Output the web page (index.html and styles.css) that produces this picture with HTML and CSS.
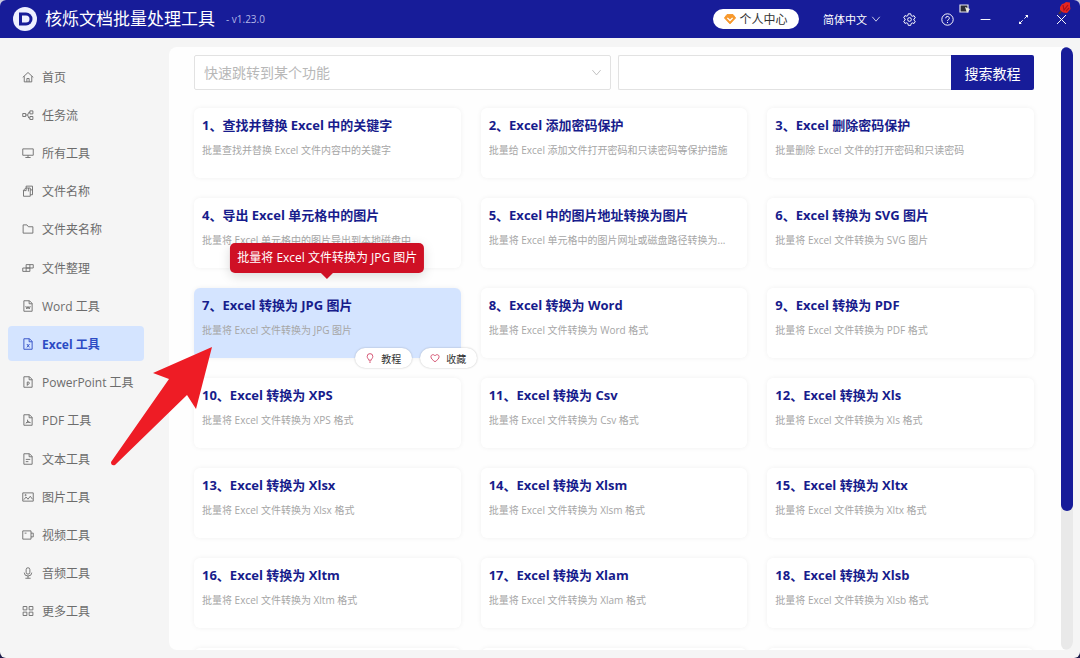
FILE: index.html
```
<!DOCTYPE html>
<html lang="zh-CN">
<head>
    <meta charset="UTF-8">
    <meta name="viewport" content="width=device-width, initial-scale=1.0">
    <title>核烁文档批量处理工具</title>
    <link rel="stylesheet" href="styles.css">
</head>
<body>
    <header class="topbar">
        <svg class="logo" viewBox="0 0 24 24">
            <circle cx="12" cy="12" r="12" fill="#eef0ff"/>
            <path d="M6 5.5H13a6.5 6.5 0 0 1 0 13H6z" fill="#171c99"/>
            <path d="M9 8.500H13a3.500 3.500 0 0 1 0 7H9z" fill="#eef0ff"/>
        </svg>
        <h1>核烁文档批量处理工具</h1>
        <span class="version">- v1.23.0</span>
        <button class="user-center">
            <svg viewBox="0 0 16 16"><path d="M4 2h8l3.5 4.5L8 14.5.5 6.5z" fill="#f7992c" stroke="#f7992c" stroke-linejoin="round"/><path d="M4.5 6.5 8 10l3.5-3.5" fill="none" stroke="#fff" stroke-width="1.8"/></svg>
            个人中心
        </button>
        <div class="lang">
            <select aria-label="语言"><option>简体中文</option></select>
            <svg viewBox="0 0 16 16"><path d="M2 4.5l6 7 6-7"/></svg>
        </div>
        <div class="window-buttons">
            <button aria-label="设置"><svg viewBox="0 0 16 16"><path d="M6.5 1h3l.5 2.200 1.400.8 2.200-.7 1.500 2.600-1.700 1.500v1.400l1.700 1.500-1.500 2.600-2.200-.7-1.400.8-.5 2.200h-3L6 12.900l-1.400-.8-2.200.7-1.500-2.600 1.700-1.500V7.300L.9 5.800l1.500-2.600 2.200.7L6 3.200z"/><circle cx="8" cy="8" r="2.300"/></svg></button>
            <button aria-label="帮助"><svg viewBox="0 0 16 16"><circle cx="8" cy="8" r="7"/><path d="M5.800 6.500a2.200 2.200 0 1 1 3.300 1.800C8.300 8.700 8 9 8 9.900M8 11v1.300"/></svg></button>
            <button aria-label="最小化"><svg viewBox="0 0 16 16"><path d="M2 8h12"/></svg></button>
            <button aria-label="最大化"><svg viewBox="0 0 16 16"><path d="M3.500 12.500l9-9" stroke-dasharray="5 3"/><path class="solid" d="M10 2.500h3.500V6zM2.500 10v3.500H6z"/></svg></button>
            <button aria-label="关闭"><svg viewBox="0 0 16 16"><path d="M2.500 2.500l11 11M13.500 2.500l-11 11"/></svg></button>
        </div>
        <svg class="screen-mark" viewBox="0 0 12 10">
            <path d="M1 1h8v7H1z" fill="#2b2b35" stroke="#e6e6ee"/><path d="M6 3l5 2-3 4z" fill="#e9e9dd"/>
        </svg>
        <svg class="tulip" viewBox="0 0 14 14">
            <path d="M4 9 1 13" stroke="#4a3038" stroke-width="2"/>
            <path d="M2 6l2-3 2-.5L8 1l4 .5V5l.5 3L9 12l-4-.5L2 9z" fill="#e52520"/><path d="M5 4l1 5 4-5M8 10l3-3" fill="none" stroke="#a80f18"/>
        </svg>
    </header>

    <div class="layout">
        <nav class="sidebar">
            <a href="#"><svg viewBox="0 0 16 16"><path d="M1 8.500 8 2l7 6.500M3 7v7.500h10V7M6.500 14.500V10h3v4.500"/></svg>首页</a>
            <a href="#"><svg viewBox="0 0 16 16"><path d="M1 6h4v4H1zM10.500 2.500h4v4h-4zM10.500 10h4v4h-4zM5 8h2.500M10.500 4.500H9L7.500 8 9 12h1.500"/></svg>任务流</a>
            <a href="#"><svg viewBox="0 0 16 16"><path d="M1 2.500h14v8.500H1zM8 11v3M4.500 14h7"/></svg>所有工具</a>
            <a href="#"><svg viewBox="0 0 16 16"><path d="M5.500 4V1.500H14V13h-3M2 7l3-3h6v11H2zM2 7.500h3.500V4M8.500 8.500V4M11 6.500h3"/></svg>文件名称</a>
            <a href="#"><svg viewBox="0 0 16 16"><path d="M1.500 2.500h5l2 2.500h6v8.500h-13z"/></svg>文件夹名称</a>
            <a href="#"><svg viewBox="0 0 16 16"><path d="M5.500 3.500H15V8H5.500zM1 8h9.500v4.500H1zM5.500 8v4.500M10.500 3.500V8"/></svg>文件整理</a>
            <a href="#"><svg viewBox="0 0 16 16"><path d="M2.500 1H10l3.500 3.500V15h-11zM9.500 1v4h4M5 8l1.500 4L8 8.500 9.500 12 11 8"/></svg>Word 工具</a>
            <a href="#" class="active"><svg viewBox="0 0 16 16"><path d="M2.500 1H10l3.500 3.500V15h-11zM9.500 1v4h4M6.500 8l3.500 4.500M10 8l-3.500 4.500"/></svg>Excel 工具</a>
            <a href="#"><svg viewBox="0 0 16 16"><path d="M2.500 1H10l3.500 3.500V15h-11zM9.500 1v4h4M7 13V8h2q1.500 1.500 0 3H7"/></svg>PowerPoint 工具</a>
            <a href="#"><svg viewBox="0 0 16 16"><path d="M2.500 1H10l3.500 3.500V15h-11zM9.500 1v4h4M7.500 7.500q1 3-2.500 5M7.500 9q.5 2.500 4 2.500M6 11.500q2-1 4-.5"/></svg>PDF 工具</a>
            <a href="#"><svg viewBox="0 0 16 16"><path d="M2.500 1H10l3.500 3.500V15h-11zM9.500 1v4h4M5 8.500h6M5 11.500h3.500"/></svg>文本工具</a>
            <a href="#"><svg viewBox="0 0 16 16"><path d="M1 2.500h14v11H1zM2.500 11.500l3-3.500 2.500 3 3-4 3 4"/><circle cx="4.800" cy="5.500" r=".8"/></svg>图片工具</a>
            <a href="#"><svg viewBox="0 0 16 16"><path d="M1 2.500h11v11H1zM12 5.500h3v5h-3M3.500 5.500H6"/></svg>视频工具</a>
            <a href="#"><svg viewBox="0 0 16 16"><rect x="5.500" y="1" width="5" height="8.500" rx="2.500"/><path d="M3 7.500a5 4.500 0 0 0 10 0M8 12v3M4.500 15h7"/></svg>音频工具</a>
            <a href="#"><svg viewBox="0 0 16 16"><path d="M1.500 2h5v4.500h-5zM9.500 2h5v4.500h-5zM1.500 9.500h5V14h-5zM9.500 9.500h5V14h-5z"/></svg>更多工具</a>
        </nav>

        <main class="panel">
            <div class="content">
                <div class="search-row">
                    <div class="jump">
                        <select aria-label="快速跳转到某个功能"><option>快速跳转到某个功能</option></select>
                        <svg viewBox="0 0 16 16"><path d="M2 4.5l6 7 6-7"/></svg>
                    </div>
                    <form class="search">
                        <input type="text" aria-label="搜索教程">
                        <button type="button">搜索教程</button>
                    </form>
                </div>

                <div class="cards">
                    <section class="card"><h2>1、查找并替换 Excel 中的关键字</h2><p>批量查找并替换 Excel 文件内容中的关键字</p></section>
                    <section class="card"><h2>2、Excel 添加密码保护</h2><p>批量给 Excel 添加文件打开密码和只读密码等保护措施</p></section>
                    <section class="card"><h2>3、Excel 删除密码保护</h2><p>批量删除 Excel 文件的打开密码和只读密码</p></section>
                    <section class="card"><h2>4、导出 Excel 单元格中的图片</h2><p>批量将 Excel 单元格中的图片导出到本地磁盘中</p></section>
                    <section class="card"><h2>5、Excel 中的图片地址转换为图片</h2><p>批量将 Excel 单元格中的图片网址或磁盘路径转换为...</p></section>
                    <section class="card"><h2>6、Excel 转换为 SVG 图片</h2><p>批量将 Excel 文件转换为 SVG 图片</p></section>
                    <section class="card hovered">
                        <h2>7、Excel 转换为 JPG 图片</h2>
                        <p>批量将 Excel 文件转换为 JPG 图片</p>
                        <div class="tooltip" role="tooltip">批量将 Excel 文件转换为 JPG 图片</div>
                        <div class="actions">
                            <button><svg viewBox="0 0 16 16"><path d="M6 11.500C6 9.500 3.500 8.500 3.500 5.500a4.500 4.500 0 0 1 9 0c0 3-2.500 4-2.500 6zM6.500 14.500h3"/></svg>教程</button>
                            <button><svg viewBox="0 0 16 16"><path d="M8 14C4 11 1.500 9 1.500 5.800 1.500 2.500 6 1.500 8 4.500c2-3 6.500-2 6.500 1.300C14.500 9 12 11 8 14z"/></svg>收藏</button>
                        </div>
                    </section>
                    <section class="card"><h2>8、Excel 转换为 Word</h2><p>批量将 Excel 文件转换为 Word 格式</p></section>
                    <section class="card"><h2>9、Excel 转换为 PDF</h2><p>批量将 Excel 文件转换为 PDF 格式</p></section>
                    <section class="card"><h2>10、Excel 转换为 XPS</h2><p>批量将 Excel 文件转换为 XPS 格式</p></section>
                    <section class="card"><h2>11、Excel 转换为 Csv</h2><p>批量将 Excel 文件转换为 Csv 格式</p></section>
                    <section class="card"><h2>12、Excel 转换为 Xls</h2><p>批量将 Excel 文件转换为 Xls 格式</p></section>
                    <section class="card"><h2>13、Excel 转换为 Xlsx</h2><p>批量将 Excel 文件转换为 Xlsx 格式</p></section>
                    <section class="card"><h2>14、Excel 转换为 Xlsm</h2><p>批量将 Excel 文件转换为 Xlsm 格式</p></section>
                    <section class="card"><h2>15、Excel 转换为 Xltx</h2><p>批量将 Excel 文件转换为 Xltx 格式</p></section>
                    <section class="card"><h2>16、Excel 转换为 Xltm</h2><p>批量将 Excel 文件转换为 Xltm 格式</p></section>
                    <section class="card"><h2>17、Excel 转换为 Xlam</h2><p>批量将 Excel 文件转换为 Xlam 格式</p></section>
                    <section class="card"><h2>18、Excel 转换为 Xlsb</h2><p>批量将 Excel 文件转换为 Xlsb 格式</p></section>
                    <section class="card"></section>
                    <section class="card"></section>
                    <section class="card"></section>
                </div>
            </div>
            <div class="scrollbar"><div class="thumb"></div></div>
        </main>
    </div>

    <svg class="pointer" viewBox="0 0 102 119">
        <path d="M102 0 43 26l16 6L1 115q0 4 4 3L77 48l9 14z" fill="#ee1c25"/>
    </svg>
</body>
</html>
```
FILE: styles.css
```
* {
    box-sizing: border-box;
}
html {
    background: linear-gradient(#c9cbe0 50%, #1d1d4a 50%);
}
body {
    display: flex;
    flex-direction: column;
    height: 100vh;
    margin: 0;
    overflow: hidden;
    border-radius: 6px;
    background-color: #f5f5f5;
    font-family: "Open Sans", "Noto Sans CJK SC", sans-serif;
    font-size: 12px;
    position: relative;
}
button, input, select {
    font-family: inherit;
    border: none;
    margin: 0;
    padding: 0;
}
svg {
    flex: none;
    fill: none;
    stroke: currentColor;
    stroke-width: 1.2;
}
.logo, .screen-mark, .tulip, .pointer {
    stroke: none;
}

/* top bar */
.topbar {
    display: flex;
    align-items: center;
    flex: none;
    height: 38px;
    padding-left: 13px;
    background-color: #171c99;
    color: white;
    position: relative;
}
.logo {
    width: 24px;
    height: 24px;
}
.topbar h1 {
    margin: 0 11px 0 8px;
    font-size: 17px;
    font-weight: 400;
    line-height: 24px;
}
.version {
    color: #b4b7e6;
    font-size: 10px;
}
.user-center {
    display: flex;
    align-items: center;
    justify-content: center;
    gap: 3px;
    width: 86px;
    height: 20px;
    margin-left: auto;
    border-radius: 10px;
    background-color: white;
    color: #333;
    font-size: 12px;
}
.user-center svg {
    width: 12px;
    height: 12px;
}
.lang {
    display: flex;
    align-items: center;
    margin: 0 9px 0 24px;
    width: 58px;
    position: relative;
}
.lang select {
    appearance: none;
    width: 100%;
    background: none;
    color: white;
    font-size: 11px;
}
.lang svg {
    position: absolute;
    right: 0;
    width: 10px;
    height: 10px;
    pointer-events: none;
}
.window-buttons {
    display: flex;
}
.window-buttons button {
    display: flex;
    align-items: center;
    justify-content: center;
    width: 38px;
    height: 38px;
    background: none;
    color: white;
}
.window-buttons svg {
    width: 13px;
    height: 13px;
}
.window-buttons .solid {
    fill: white;
    stroke: none;
}
.screen-mark {
    position: absolute;
    top: 4px;
    right: 109px;
    width: 12px;
    height: 10px;
}
.tulip {
    position: absolute;
    top: 1px;
    right: 8px;
    width: 14px;
    height: 14px;
}

/* side menu */
.layout {
    display: flex;
    flex: 1;
    min-height: 0;
}
.sidebar {
    display: flex;
    flex-direction: column;
    justify-content: space-between;
    flex: none;
    width: 169px;
    padding: 21px 25px 29px 8px;
}
.sidebar a {
    display: flex;
    align-items: center;
    gap: 8px;
    height: 35px;
    padding-left: 14px;
    border-radius: 4px;
    color: #6c6c6c;
    text-decoration: none;
}
.sidebar svg {
    width: 12px;
    height: 12px;
}
.sidebar .active {
    background-color: #d4e4ff;
    color: #2c4bc4;
    font-weight: 700;
}

/* main panel */
.panel {
    display: flex;
    flex: 1;
    min-width: 0;
    margin: 9px 7px 8px 0;
    border-radius: 8px;
    background-color: #fefefe;
    overflow: hidden;
}
.content {
    flex: 1;
    min-width: 0;
    padding: 8px 27px 0 25px;
}
.search-row {
    display: grid;
    grid-template-columns: 1fr 1fr;
    gap: 7px;
    margin-bottom: 18px;
}
.jump {
    display: flex;
    align-items: center;
    position: relative;
}
.jump select {
    appearance: none;
    width: 100%;
    height: 35px;
    padding-left: 9px;
    border: 1px solid #e2e2e2;
    border-radius: 2px;
    background-color: white;
    color: #b8b8b8;
    font-size: 14px;
}
.jump svg {
    position: absolute;
    right: 9px;
    width: 11px;
    height: 11px;
    color: #b5b5b5;
    pointer-events: none;
}
.search {
    display: flex;
}
.search input {
    flex: 1;
    min-width: 0;
    height: 35px;
    padding: 0 10px;
    border: 1px solid #e2e2e2;
    border-right: none;
    border-radius: 2px 0 0 2px;
    font-size: 14px;
}
.search button {
    width: 83px;
    border-radius: 0 2px 2px 0;
    background-color: #171c99;
    color: white;
    font-size: 14px;
}
.cards {
    display: grid;
    grid-template-columns: repeat(3, minmax(0, 1fr));
    gap: 20px;
}
.card {
    height: 70px;
    padding: 8px;
    border-radius: 6px;
    background-color: white;
    box-shadow: 0 0 5px rgba(0, 0, 0, 0.06);
    position: relative;
}
.card h2 {
    margin: 0 0 8px;
    color: #171c8c;
    font-size: 13px;
    font-weight: 700;
    line-height: 18px;
    white-space: nowrap;
}
.card p {
    margin: 0;
    color: #a6a6a6;
    font-size: 10px;
    line-height: 16px;
    white-space: nowrap;
    overflow: hidden;
    text-overflow: ellipsis;
}
.card.hovered {
    background-color: #d4e4ff;
    z-index: 1;
}
.tooltip {
    position: absolute;
    bottom: 100%;
    left: 50%;
    transform: translateX(-50%);
    margin-bottom: 15px;
    padding: 0 7px;
    border-radius: 5px;
    background-color: #cf1025;
    box-shadow: 0 3px 12px rgba(0, 0, 0, 0.15);
    color: white;
    font-size: 12px;
    line-height: 30px;
    white-space: nowrap;
}
.tooltip::after {
    content: "";
    position: absolute;
    top: 100%;
    left: 50%;
    margin-left: -6px;
    border: 6px solid transparent;
    border-top-color: #cf1025;
    border-bottom: none;
}
.actions {
    display: flex;
    gap: 8px;
    position: absolute;
    right: -16px;
    bottom: -10px;
}
.actions button {
    display: flex;
    align-items: center;
    justify-content: center;
    gap: 6px;
    width: 57px;
    height: 20px;
    border-radius: 10px;
    background-color: white;
    box-shadow: 0 0 2px rgba(0, 0, 0, 0.25);
    color: #333;
    font-size: 10px;
}
.actions svg {
    width: 10px;
    height: 10px;
    color: #c8234a;
}

/* scroll bar */
.scrollbar {
    flex: none;
    width: 12px;
    border-radius: 6px;
    background-color: #e9e9e9;
}
.thumb {
    height: 77%;
    border-radius: 6px;
    background-color: #171c99;
}

/* red arrow over the page */
.pointer {
    position: absolute;
    left: 110px;
    top: 347px;
    width: 102px;
    height: 119px;
    z-index: 2;
    pointer-events: none;
}
```
